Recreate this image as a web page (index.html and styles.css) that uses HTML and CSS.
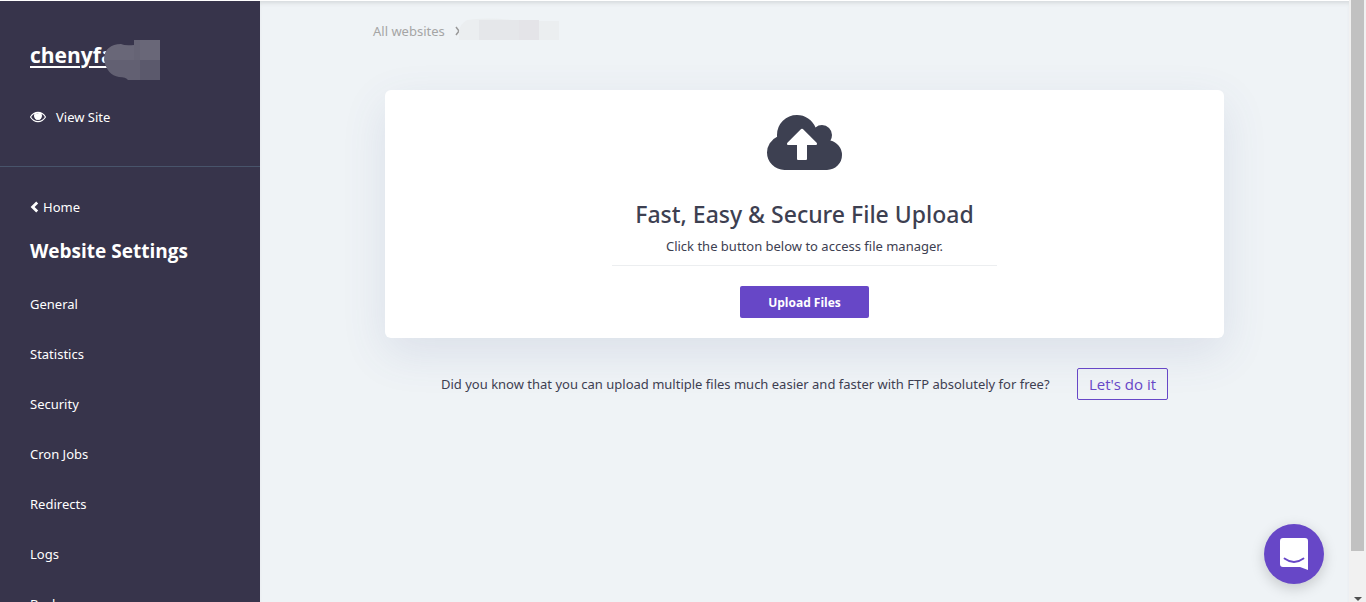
FILE: index.html
```html
<!DOCTYPE html>
<html lang="en">
<head>
<meta charset="utf-8">
<title>Upload Files</title>
<link rel="stylesheet" href="styles.css">
</head>
<body>
<div class="app">
  <aside class="sidebar">
    <div class="site">
      <div class="site-title">
        <a class="site-name" href="#">chenyfa</a>
        <svg class="site-mask" width="56" height="40" viewBox="0 0 56 40" aria-hidden="true">
          <path fill="#696778" d="M0 20C0 9 7 4 17 4Q21 6 30 5V0H56V20Z"/>
          <path fill="#626072" d="M0 20H36V40H24Q22 37 15 37Q3 35 0 20Z"/>
          <path fill="#5b596c" d="M36 20H56V40H36Z"/>
          <path fill="#666475" d="M30 0H36V20H30Z"/>
        </svg>
      </div>
      <a class="view-site" href="#">
        <svg width="16" height="12" viewBox="0 300 1792 1320" aria-hidden="true"><path fill="currentColor" d="M1664 960q-152-236-381-353 61 104 61 225 0 185-131.500 316.500t-316.500 131.500-316.500-131.500-131.500-316.500q0-121 61-225-229 117-381 353 133 205 333.500 326.500t434.500 121.500 434.500-121.500 333.500-326.500zm-720-384q0-20-14-34t-34-14q-125 0-214.500 89.500t-89.500 214.500q0 20 14 34t34 14 34-14 14-34q0-86 61-147t147-61q20 0 34-14t14-34zm848 384q0 34-20 69-140 230-376.500 368.500t-499.500 138.500-499.500-139-376.500-368q-20-35-20-69t20-69q140-229 376.500-368t499.500-139 499.500 139 376.500 368q20 35 20 69z"/><circle cx="896" cy="900" r="360" fill="currentColor"/></svg>
        View Site
      </a>
    </div>
    <nav class="nav">
      <a class="home" href="#">
        <svg width="9" height="12" viewBox="0 0 9 12" aria-hidden="true"><path d="M7.200 1.500L2.600 6l4.600 4.500" fill="none" stroke="currentColor" stroke-width="2.800"/></svg>
        Home
      </a>
      <h2 class="nav-title">Website Settings</h2>
      <a class="nav-link" href="#">General</a>
      <a class="nav-link" href="#">Statistics</a>
      <a class="nav-link" href="#">Security</a>
      <a class="nav-link" href="#">Cron Jobs</a>
      <a class="nav-link" href="#">Redirects</a>
      <a class="nav-link" href="#">Logs</a>
      <a class="nav-link" href="#">Backups</a>
    </nav>
  </aside>

  <main class="main">
    <div class="container">
      <div class="breadcrumb">
        <a class="crumb" href="#">All websites</a>
        <svg width="104" height="22" viewBox="0 0 104 22" aria-hidden="true">
          <path d="M1 9l3 4-3 4" fill="none" stroke="#999" stroke-width="1.500"/>
          <path fill="#ebeef0" d="M4 22V13Q5 6 12 2Q30-1 57 2L82 3H104V22Z"/>
          <path fill="#e5e7ea" d="M24 2H64V22H24Z"/>
          <path fill="#e4e4e8" d="M64 2H84V22H64Z"/>
        </svg>
      </div>
      <section class="card">
        <svg class="cloud" width="75" height="55" viewBox="0 64 1920 1408" aria-hidden="true"><path fill="#3d4051" d="M1280 800q0-14-9-23l-352-352q-9-9-23-9t-23 9l-351 351q-10 12-10 24 0 14 9 23t23 9h224v352q0 13 9.500 22.500t22.500 9.500h192q13 0 22.500-9.500t9.500-22.500v-352h224q13 0 22.500-9.500t9.500-22.500zm640 288q0 159-112.500 271.500t-271.500 112.500h-1088q-185 0-316.500-131.500t-131.500-316.500q0-130 70-240t188-165q-2-30-2-43 0-212 150-362t362-150q156 0 285.500 87t188.500 231q71-62 166-62 106 0 181 75t75 181q0 76-41 138 130 31 213.500 135.500t83.500 238.500z"/></svg>
        <h1 class="card-title">Fast, Easy &amp; Secure File Upload</h1>
        <p class="card-text">Click the button below to access file manager.</p>
        <button class="upload" type="button">Upload Files</button>
      </section>
      <div class="hint">
        <p class="hint-text">Did you know that you can upload multiple files much easier and faster with FTP absolutely for free?</p>
        <a class="hint-action" href="#">Let's do it</a>
      </div>
    </div>
    <button class="chat" type="button" aria-label="Open chat">
      <svg width="28" height="32" viewBox="0 0 28 32" aria-hidden="true">
        <path fill="#fff" d="M3 0H25Q28 0 28 3V32L20 29H3Q0 29 0 26V3Q0 0 3 0Z"/>
        <path d="M4.500 20.500Q14 27.500 23.500 20.500" fill="none" stroke="#6747c7" stroke-width="1.800" stroke-linecap="round"/>
      </svg>
    </button>
  </main>

  <div class="scrollbar" aria-hidden="true">
    <div class="thumb"></div>
    <svg width="8" height="4" viewBox="0 0 8 4"><path fill="#505050" d="M0 0H8L4 4Z"/></svg>
  </div>
</div>
</body>
</html>
```
FILE: styles.css
```css
* {
  box-sizing: border-box;
}

body {
  margin: 0;
  font-family: "Noto Sans", "Open Sans", sans-serif;
  font-size: 13px;
  line-height: 20px;
  color: #3d4051;
}

a {
  color: inherit;
  text-decoration: none;
}

h1, h2, p {
  margin: 0;
}

.app {
  display: grid;
  grid-template-columns: 260px 1fr 17px;
  height: 100vh;
  overflow: hidden;
  background: #eff3f6;
}

.sidebar {
  margin-top: 1px;
  overflow: hidden;
  background: #37344b;
  color: #fff;
  box-shadow: 0 -1px #fff;
}

.site {
  height: 166px;
  padding: 38px 30px 0;
  border-bottom: 1px solid #48546b;
}

.site-title {
  position: relative;
  line-height: 32px;
}

.site-name {
  font-family: "Open Sans", sans-serif;
  font-size: 21px;
  font-weight: 700;
  text-decoration: underline;
  text-decoration-thickness: 2px;
  text-underline-offset: 3px;
}

.site-mask {
  position: absolute;
  top: 1px;
  left: 74px;
}

.view-site {
  display: flex;
  align-items: center;
  gap: 10px;
  margin-top: 33px;
}

.nav {
  display: flex;
  flex-direction: column;
  padding: 30px 30px 0;
}

.home {
  display: flex;
  align-items: center;
  gap: 4px;
}

.nav-title {
  margin: 18px 0 12px;
  font-family: "Open Sans", sans-serif;
  font-size: 19px;
  line-height: 32px;
}

.nav-link {
  padding: 15px 0;
}

.main {
  padding: 20px 20px 0;
  border-top: 1px solid #fff;
  box-shadow: inset 0 4px 4px -2px #d5d9db;
}

.container {
  max-width: 863px;
  margin: 0 auto;
}

.breadcrumb {
  display: flex;
  align-items: center;
  gap: 10px;
  height: 20px;
  color: #a5a5a5;
}

.breadcrumb svg {
  margin-bottom: 4px;
}

.card {
  display: flex;
  flex-direction: column;
  align-items: center;
  margin: 49px 12px 0;
  padding: 25px 20px 20px;
  border-radius: 6px;
  background: #fff;
  box-shadow: 0 15px 45px rgba(70, 90, 150, 0.12);
}

.card-title {
  margin-top: 28px;
  font-size: 23px;
  font-weight: 500;
  line-height: 32px;
}

.card-text {
  width: 385px;
  max-width: 100%;
  margin: 6px 0 20px;
  padding-bottom: 9px;
  border-bottom: 1px solid #eceef0;
  text-align: center;
}

.upload {
  width: 129px;
  height: 32px;
  padding: 0;
  border: 0;
  border-radius: 2px;
  background: #6747c7;
  color: #fff;
  font: 700 12px "Open Sans", "Noto Sans", sans-serif;
}

.hint {
  display: flex;
  justify-content: space-between;
  align-items: center;
  gap: 20px;
  margin-top: 30px;
  padding: 0 68px;
}

.hint-action {
  flex: none;
  width: 91px;
  border: 1px solid #6747c7;
  border-radius: 2px;
  color: #6747c7;
  font-family: "Open Sans", sans-serif;
  font-size: 15px;
  line-height: 30px;
  text-align: center;
}

.chat {
  position: fixed;
  right: 42px;
  bottom: 18px;
  display: flex;
  justify-content: center;
  align-items: center;
  width: 60px;
  height: 60px;
  padding: 0;
  border: 0;
  border-radius: 50%;
  background: #6747c7;
  box-shadow: 0 4px 14px rgba(0, 0, 0, 0.18);
}

.scrollbar {
  display: flex;
  flex-direction: column;
  align-items: center;
  justify-content: space-between;
  padding-bottom: 1px;
  background: #f1f1f1;
}

.thumb {
  width: 13px;
  height: 551px;
  background: #c1c1c1;
}
```
